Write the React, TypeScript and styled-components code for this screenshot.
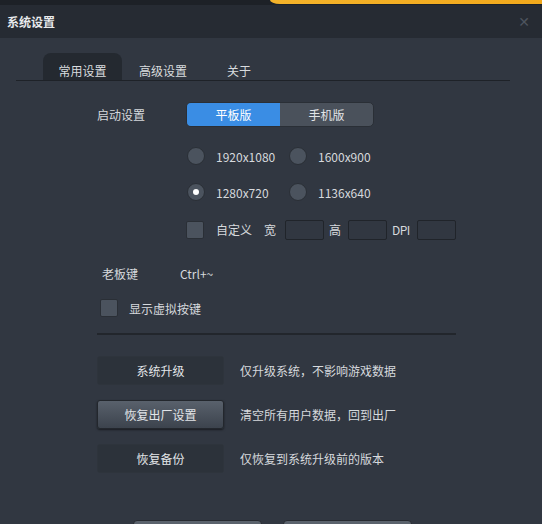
import React from 'react';
import styled, { createGlobalStyle } from 'styled-components';

const GlobalStyle = createGlobalStyle`
  body {
    margin: 0;
    background: #313741;
    font-family: "Noto Sans CJK SC", "Noto Sans", sans-serif;
    font-size: 12px;
    color: #d6d9dd;
  }
`;

const Window = styled.div`
  width: 542px;
  height: 524px;
  overflow: hidden;
  display: flex;
  flex-direction: column;
  background: #313741;
`;

const TopStrip = styled.div`
  flex-shrink: 0;
  height: 5px;
  background: #1d2127;
  display: flex;
  justify-content: flex-end;
`;

const AccentBar = styled.div`
  width: 272px;
  height: 4px;
  background: linear-gradient(90deg, #f4b32a, #f2a91c);
  border-bottom-left-radius: 10px 4px;
`;

const TitleBar = styled.div`
  flex-shrink: 0;
  height: 33px;
  background: #262b33;
  display: flex;
  align-items: center;
  justify-content: space-between;
  padding: 0 12px 0 7px;
`;

const Title = styled.span`
  font-weight: bold;
  color: #e8eaec;
  font-size: 12px;
`;

const Close = styled.span`
  color: #4d545e;
  font-family: "DejaVu Sans", sans-serif;
  font-size: 14px;
`;

const Body = styled.div`
  flex-shrink: 0;
  padding: 15px 32px 0 16px;
`;

const TabBar = styled.div`
  display: flex;
  align-items: flex-end;
  height: 27px;
  padding-left: 27px;
  border-bottom: 1px solid #1e2228;
`;

const Tab = styled.div<{ $active?: boolean }>`
  height: 27px;
  box-sizing: border-box;
  padding-top: 8px;
  display: flex;
  align-items: center;
  justify-content: center;
  width: ${p => (p.$active ? '79px' : 'auto')};
  padding-left: ${p => (p.$active ? '0' : '17px')};
  margin-right: ${p => (p.$active ? '0' : '23px')};
  border-radius: 8px 8px 0 0;
  background: ${p => (p.$active ? '#242930' : 'transparent')};
  color: #d9dcdf;
`;

const Form = styled.div`
  padding: 20px 0 0 81px;
  width: 359px;
`;

const Row = styled.div<{ $h: number; $indent?: number }>`
  display: flex;
  align-items: center;
  height: ${p => p.$h}px;
  padding-left: ${p => p.$indent ?? 0}px;
  white-space: nowrap;
  & > * {
    flex-shrink: 0;
  }
`;

const Label = styled.span<{ $w: number }>`
  width: ${p => p.$w}px;
`;

const Segment = styled.div`
  display: flex;
  width: 188px;
  height: 25px;
  border-radius: 5px;
  overflow: hidden;
  background: #4a515b;
  border: 1px solid #2a2f36;
  box-sizing: border-box;
`;

const SegmentItem = styled.div<{ $active?: boolean }>`
  flex: 1;
  display: flex;
  align-items: center;
  justify-content: center;
  background: ${p => (p.$active ? '#3a8de4' : 'transparent')};
  color: ${p => (p.$active ? '#ffffff' : '#e2e5e8')};
`;

const RadioOption = styled.label`
  width: 102px;
  display: flex;
  align-items: center;
  gap: 11px;
`;

const Radio = styled.span<{ $checked?: boolean }>`
  width: 18px;
  height: 18px;
  border-radius: 50%;
  background: #4b535e;
  border: 1px solid #2a2f36;
  box-sizing: border-box;
  display: flex;
  align-items: center;
  justify-content: center;
  &::after {
    content: '';
    width: 6px;
    height: 6px;
    border-radius: 50%;
    background: #ffffff;
    display: ${p => (p.$checked ? 'block' : 'none')};
  }
`;

const Checkbox = styled.span`
  width: 18px;
  height: 18px;
  border-radius: 2px;
  background: #4b535e;
  border: 1px solid #2a2f36;
  box-sizing: border-box;
`;

const FieldLabel = styled.span<{ $narrow?: boolean }>`
  letter-spacing: ${p => (p.$narrow ? '-0.6px' : '0')};
`;

const SizeInput = styled.span`
  width: 39px;
  height: 20px;
  border: 1px solid #20242a;
  border-radius: 2px;
  box-sizing: border-box;
  margin: 0 5px 0 7px;
`;

const Separator = styled.div`
  height: 2px;
  background: #22262c;
  margin: 12px 0 21px 0;
`;

const ActionRow = styled.div`
  display: flex;
  align-items: center;
  gap: 16px;
  height: 29px;
  margin-bottom: 15px;
  white-space: nowrap;
`;

const ActionButton = styled.div<{ $hover?: boolean }>`
  width: 127px;
  height: 29px;
  flex-shrink: 0;
  box-sizing: border-box;
  display: flex;
  align-items: center;
  justify-content: center;
  border-radius: 3px;
  background: ${p => (p.$hover ? 'linear-gradient(#59616c, #3c434d)' : '#2c323a')};
  border: 1px solid ${p => (p.$hover ? '#23272d' : '#2e343c')};
  box-shadow: ${p => (p.$hover ? '0 1px 2px rgba(0,0,0,0.5)' : 'none')};
  color: #e2e5e8;
`;

const Footer = styled.div`
  display: flex;
  gap: 21px;
  padding: 32px 0 0 117px;
`;

const FooterButton = styled.div`
  width: 129px;
  height: 24px;
  border-radius: 4px;
  background: #5a626c;
  border: 1px solid #262a30;
  box-sizing: border-box;
`;

const App: React.FC = () => {
  return (
    <Window>
      <GlobalStyle />
      <TopStrip>
        <AccentBar />
      </TopStrip>
      <TitleBar>
        <Title>系统设置</Title>
        <Close>✕</Close>
      </TitleBar>
      <Body>
        <TabBar>
          <Tab $active>常用设置</Tab>
          <Tab>高级设置</Tab>
          <Tab>关于</Tab>
        </TabBar>
        <Form>
          <Row $h={26}>
            <Label $w={89}>启动设置</Label>
            <Segment>
              <SegmentItem $active>平板版</SegmentItem>
              <SegmentItem>手机版</SegmentItem>
            </Segment>
          </Row>
          <Row $h={36} $indent={90} style={{ marginTop: 11 }}>
            <RadioOption><Radio />1920x1080</RadioOption>
            <RadioOption><Radio />1600x900</RadioOption>
          </Row>
          <Row $h={36} $indent={90}>
            <RadioOption><Radio $checked />1280x720</RadioOption>
            <RadioOption><Radio />1136x640</RadioOption>
          </Row>
          <Row $h={39} $indent={89}>
            <Checkbox />
            <span style={{ marginLeft: 12, marginRight: 12 }}>自定义</span>
            <FieldLabel style={{ marginRight: 2 }}>宽</FieldLabel>
            <SizeInput />
            <FieldLabel>高</FieldLabel>
            <SizeInput />
            <FieldLabel $narrow>DPI</FieldLabel>
            <SizeInput />
          </Row>
          <Row $h={44} $indent={5} style={{ marginTop: 2 }}>
            <Label $w={78}>老板键</Label>
            <span>Ctrl+~</span>
          </Row>
          <Row $h={26} $indent={3}>
            <Checkbox />
            <span style={{ marginLeft: 11 }}>显示虚拟按键</span>
          </Row>
          <Separator />
          <ActionRow>
            <ActionButton>系统升级</ActionButton>
            <span>仅升级系统，不影响游戏数据</span>
          </ActionRow>
          <ActionRow>
            <ActionButton $hover>恢复出厂设置</ActionButton>
            <span>清空所有用户数据，回到出厂</span>
          </ActionRow>
          <ActionRow>
            <ActionButton>恢复备份</ActionButton>
            <span>仅恢复到系统升级前的版本</span>
          </ActionRow>
        </Form>
        <Footer>
          <FooterButton />
          <FooterButton />
        </Footer>
      </Body>
    </Window>
  );
};

export default App;
